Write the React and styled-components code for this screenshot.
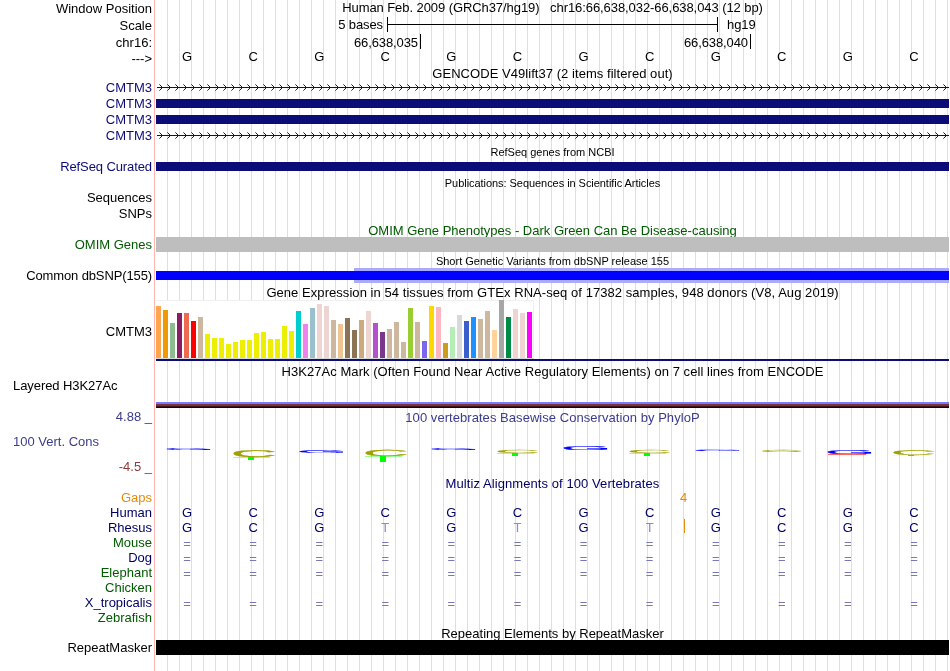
import React from 'react'
import styled, { createGlobalStyle } from 'styled-components'

const NAVY = '#0c0c78'
const ALIGN = '#000064'
const GREEN = '#005a00'
const ORANGE = '#e68a0a'
const CONS = '#3c3c8c'

const BASES = 'GCGCGCGCGCGC'.split('')
const RHESUS = 'GCGTGTGTGCGC'.split('')
const EQUALS = '============'.split('')

// [bar height, colour] for each of the GTEx tissues
const TISSUES = [
  [52, '#ffa54f'], [48, '#ee9a00'], [35, '#8fbc8f'], [45, '#8b1c62'], [45, '#ee6a50'], [37, '#ff0000'],
  [41, '#cdb79e'], [24, '#eeee00'], [20, '#eeee00'], [20, '#eeee00'], [14, '#eeee00'], [16, '#eeee00'],
  [18, '#eeee00'], [18, '#eeee00'], [25, '#eeee00'], [26, '#eeee00'], [19, '#eeee00'], [19, '#eeee00'],
  [32, '#eeee00'], [27, '#eeee00'], [47, '#00cdcd'], [34, '#ee82ee'], [50, '#9ac0cd'], [54, '#eed5d2'],
  [52, '#eed5d2'], [38, '#cdb79e'], [34, '#eec591'], [40, '#8b7355'], [28, '#8b7355'], [38, '#cdaa7d'],
  [47, '#eed5d2'], [35, '#b452cd'], [26, '#7a378b'], [29, '#cdb79e'], [36, '#cdb79e'], [16, '#cdb79e'],
  [50, '#9acd32'], [36, '#cdb79e'], [17, '#7a67ee'], [52, '#ffd700'], [51, '#ffb6c1'], [15, '#cd9b1d'],
  [31, '#b4eeb4'], [43, '#d9d9d9'], [37, '#3a5fcd'], [41, '#1e90ff'], [39, '#cdb79e'], [47, '#cdb79e'],
  [28, '#ffd39b'], [58, '#a6a6a6'], [41, '#008b45'], [49, '#eed5d2'], [45, '#eed5d2'], [46, '#ff00ff'],
]

// squashed logo letters: x, top, width, height
const LOGO = [
  ['G', 11, 23, 43, 2], ['C', 78, 25, 41, 7], ['G', 144, 25, 43, 3], ['C', 210, 25, 41, 6.4],
  ['G', 276, 23, 43, 2], ['C', 342, 25, 40, 3.4], ['G', 408, 21, 43, 4], ['C', 474, 25, 40, 3.4],
  ['G', 540, 25, 43, 1.4], ['C', 606.5, 25, 39.5, 2.2], ['G', 672, 25, 43, 4], ['C', 738, 25, 40.5, 5],
]

// bases with a negative score: x, top, stem height
const BELOW = [[77, 32, 3], [209, 31, 6], [341, 28, 3], [473, 28, 3], [737, 30, 1]]

// outline of each letter at 100px: left edge, width, height, baseline overshoot
const GLYPH = {
  G: [5, 66, 72, 1],
  C: [5, 64, 72, 1],
}
const LOGO_COLOR = { G: '#0000ff', C: '#a0a000' }

const GlobalStyle = createGlobalStyle`
  body {
    margin: 0;
    background: #fff;
    overflow: hidden;
  }
`

const Browser = styled.main`
  width: 949px;
  height: 671px;
  overflow: hidden;
  will-change: transform;
  color: #000;
  font-family: "Liberation Sans", Arial, sans-serif;
  font-size: 13px;
  white-space: pre;
  background:
    linear-gradient(#ffb4b4, #ffb4b4) 154px 0 / 1px 100% no-repeat,
    repeating-linear-gradient(90deg, transparent 0 11px, #dcdcf8 11px 12px) 156px 0 / 793px 100% no-repeat;
`

const Row = styled.div`
  display: grid;
  grid-template-columns: 152px 793px;
  column-gap: 4px;
  height: ${({h}) => h}px;
`

const Label = styled.div`
  height: 15px;
  line-height: 15px;
  margin-top: ${({top}) => top || 0}px;
  padding-left: ${({left}) => left ? 13 : 0}px;
  text-align: ${({left}) => left ? 'left' : 'right'};
  letter-spacing: ${({ls}) => ls || 0}px;
  color: ${({color}) => color || '#000'};
`

const Title = styled.div`
  height: ${({small}) => small ? 12 : 15}px;
  line-height: ${({small}) => small ? 12 : 15}px;
  margin-top: ${({top}) => top || 0}px;
  font-size: ${({small}) => small ? 11 : 13}px;
  text-align: center;
  letter-spacing: ${({ls}) => ls || 0}px;
  color: ${({color}) => color || '#000'};
`

const ScaleBar = styled.div`
  display: grid;
  grid-template-columns: 227px 331px auto;
  column-gap: 4px;
  line-height: 15px;
  letter-spacing: -0.1px;
  span:first-child {
    text-align: right;
  }
  span:last-child {
    padding-left: 5px;
  }
`

const Ruler = styled.div`
  height: 15px;
  border: solid #000;
  border-width: 0 1px;
  background: linear-gradient(#000, #000) 0 7px / 100% 1px no-repeat;
`

const Ticks = styled.div`
  display: grid;
  grid-template-columns: 265px 330px;
  letter-spacing: -0.1px;
`

const Tick = styled.span`
  height: 15px;
  line-height: 17px;
  padding-right: 2px;
  border-right: 1px solid #000;
  text-align: right;
`

const Cells = styled.div`
  display: grid;
  grid-template-columns: repeat(12, 1fr);
  height: 15px;
  line-height: 15px;
  margin-top: ${({top}) => top || 0}px;
  color: ${({color}) => color || '#000'};
`

const Cell = styled.span`
  padding-right: 4px;
  text-align: center;
  color: ${({faded}) => faded ? '#8c8cbe' : 'inherit'};
`

const Bar = styled.div`
  height: ${({h}) => h || 9}px;
  margin-top: ${({top}) => top || 0}px;
  background: ${({color}) => color || NAVY};
`

const Halo = styled.div`
  box-sizing: border-box;
  height: 15px;
  padding: 3px 0;
  background: linear-gradient(#aaaaff, #aaaaff) 198px 0 / 595px 100% no-repeat;
`

const Expression = styled.div`
  display: flex;
  flex-direction: column;
  border-bottom: 2px solid ${NAVY};
`

const Tissues = styled.div`
  display: flex;
  align-items: flex-end;
  gap: 2px;
  box-sizing: border-box;
  width: 378px;
  height: 59px;
  background: #fff;
  box-shadow: inset 0 1px #f0f0f0, inset -1px 0 #f0f0f0;
  border-bottom: 1px solid #d8d8d8;
`

const Tissue = styled.i`
  width: 5px;
  height: ${({h}) => h}px;
  background: ${({color}) => color};
`

const Histone = styled.div`
  height: 2px;
  margin-top: 23px;
  background: #7a7aff;
  border-bottom: 2px solid #7a3040;
  box-shadow: 0 1px #3c1420, 0 2px #180018;
`

const Gap = styled.div`
  padding-left: 524px;
  line-height: 15px;
  color: ${ORANGE};
`

// sits on top of the bases it splits
const Insert = styled.i`
  position: absolute;
  left: 528px;
  top: -1px;
  width: 1px;
  height: 14px;
  background: ${ORANGE};
`

const Relative = styled.div`
  position: relative;
`

const Strand = ({id}) => (
  <svg width="793" height="16" shapeRendering="crispEdges">
    <defs>
      <pattern id={id} width="8" height="16" patternUnits="userSpaceOnUse">
        <path
          d="M4 5h1v1h-1zM5 6h1v1h-1zM6 7h1v1h-1zM5 8h1v1h-1zM4 9h1v1h-1z"
          fill={NAVY}
        />
        <path d="M3 4h1v1h-1zM3 10h1v1h-1z" fill={NAVY} opacity="0.6" />
      </pattern>
    </defs>
    <rect width="793" height="16" fill={`url(#${id})`} />
    <rect x="1" y="7" width="792" height="1" fill={NAVY} />
  </svg>
)

const Logo = () => (
  <svg width="793" height="50" fontSize="100" textRendering="geometricPrecision">
    {LOGO.map(([base, x, y, w, h], i) => {
      const [left, gw, gh, over] = GLYPH[base]
      const sx = w / gw
      const sy = h / gh
      return (
        <text
          key={i}
          fill={LOGO_COLOR[base]}
          stroke={LOGO_COLOR[base]}
          strokeWidth="2"
          transform={`translate(${x - left * sx} ${y + h - over * sy}) scale(${sx} ${sy})`}
        >
          {base}
        </text>
      )
    })}
    {BELOW.map(([x, y, h], i) => (
      <g key={i} fill="#00ff00" shapeRendering="crispEdges">
        <rect x={x} y={y} width="37" height="1" opacity={h > 1 ? 0.4 : 0.1} />
        <rect x={x + 15} y={y} width="6" height={h} />
      </g>
    ))}
    <rect x="672" y="29" width="38" height="1" fill="#ff0000" opacity="0.6" />
  </svg>
)

const Bases = ({letters, ...rest}) => (
  <Cells {...rest}>
    {letters.map((base, i) => <Cell key={i} faded={base === 'T' ? 'true' : undefined}>{base}</Cell>)}
  </Cells>
)

const App = () => {
  return (
    <>
      <GlobalStyle />
      <Browser>
        <Row h={17}>
          <Label top={1}>Window Position</Label>
          <Title ls={-0.075}>Human Feb. 2009 (GRCh37/hg19)   chr16:66,638,032-66,638,043 (12 bp)</Title>
        </Row>
        <Row h={17}>
          <Label top={1}>Scale</Label>
          <ScaleBar>
            <span>5 bases</span>
            <Ruler />
            <span>hg19</span>
          </ScaleBar>
        </Row>
        <Row h={17}>
          <Label top={1}>chr16:</Label>
          <Ticks>
            <Tick>66,638,035</Tick>
            <Tick>66,638,040</Tick>
          </Ticks>
        </Row>
        <Row h={15}>
          <Label>---&gt;</Label>
          <Bases letters={BASES} top={-2} />
        </Row>
        <Row h={14}>
          <Label />
          <Title ls={0.05}>GENCODE V49lift37 (2 items filtered out)</Title>
        </Row>
        <Row h={16}>
          <Label color={NAVY}>CMTM3</Label>
          <Strand id="strand-a" />
        </Row>
        <Row h={16}>
          <Label color={NAVY}>CMTM3</Label>
          <Bar top={3} />
        </Row>
        <Row h={16}>
          <Label color={NAVY}>CMTM3</Label>
          <Bar top={3} />
        </Row>
        <Row h={16}>
          <Label color={NAVY}>CMTM3</Label>
          <Strand id="strand-b" />
        </Row>
        <Row h={15}>
          <Label />
          <Title small="true" top={2}>RefSeq genes from NCBI</Title>
        </Row>
        <Row h={15}>
          <Label color={NAVY} ls={-0.1}>RefSeq Curated</Label>
          <Bar top={3} />
        </Row>
        <Row h={16}>
          <Label />
          <Title small="true" top={3} ls={-0.05}>Publications: Sequences in Scientific Articles</Title>
        </Row>
        <Row h={16}>
          <Label>Sequences</Label>
        </Row>
        <Row h={15}>
          <Label>SNPs</Label>
        </Row>
        <Row h={16}>
          <Label />
          <Title top={2} color={GREEN}>OMIM Gene Phenotypes - Dark Green Can Be Disease-causing</Title>
        </Row>
        <Row h={15}>
          <Label color={GREEN}>OMIM Genes</Label>
          <Bar h={15} color="#bebebe" />
        </Row>
        <Row h={16}>
          <Label />
          <Title small="true" top={3}>Short Genetic Variants from dbSNP release 155</Title>
        </Row>
        <Row h={15}>
          <Label ls={-0.12}>Common dbSNP(155)</Label>
          <Halo>
            <Bar color="#0000ff" />
          </Halo>
        </Row>
        <Row h={17}>
          <Label />
          <Title top={2} ls={0.055}>Gene Expression in 54 tissues from GTEx RNA-seq of 17382 samples, 948 donors (V8, Aug 2019)</Title>
        </Row>
        <Row h={61}>
          <Label top={24}>CMTM3</Label>
          <Expression>
            <Tissues>
              {TISSUES.map(([h, color], i) => <Tissue key={i} h={h} color={color} />)}
            </Tissues>
          </Expression>
        </Row>
        <Row h={18}>
          <Label />
          <Title top={3} ls={0.05}>H3K27Ac Mark (Often Found Near Active Regulatory Elements) on 7 cell lines from ENCODE</Title>
        </Row>
        <Row h={29}>
          <Label left="true" top={-1} ls={-0.07}>Layered H3K27Ac</Label>
          <Histone />
        </Row>
        <Row h={67}>
          <div>
            <Label top={1} color={CONS}>4.88 _</Label>
            <Label left="true" top={10} color={CONS}>100 Vert. Cons</Label>
            <Label top={10} color="#8c3c3c">-4.5 _</Label>
          </div>
          <div>
            <Title top={2} color={CONS} ls={0.05}>100 vertebrates Basewise Conservation by PhyloP</Title>
            <Logo />
          </div>
        </Row>
        <Row h={15}>
          <Label />
          <Title top={1} color={ALIGN} ls={0.08}>Multiz Alignments of 100 Vertebrates</Title>
        </Row>
        <Row h={15}>
          <Label color={ORANGE}>Gaps</Label>
          <Gap>4</Gap>
        </Row>
        <Row h={15}>
          <Label color={ALIGN}>Human</Label>
          <Bases letters={BASES} color={ALIGN} />
        </Row>
        <Row h={15}>
          <Label color={ALIGN}>Rhesus</Label>
          <Relative>
            <Bases letters={RHESUS} color={ALIGN} />
            <Insert />
          </Relative>
        </Row>
        <Row h={15}>
          <Label color={GREEN}>Mouse</Label>
          <Bases letters={EQUALS} top={1} color="#7878b4" />
        </Row>
        <Row h={15}>
          <Label color={ALIGN}>Dog</Label>
          <Bases letters={EQUALS} top={1} color="#7878b4" />
        </Row>
        <Row h={15}>
          <Label color={GREEN}>Elephant</Label>
          <Bases letters={EQUALS} top={1} color="#7878b4" />
        </Row>
        <Row h={15}>
          <Label color={GREEN}>Chicken</Label>
        </Row>
        <Row h={15}>
          <Label color={ALIGN}>X_tropicalis</Label>
          <Bases letters={EQUALS} top={1} color="#7878b4" />
        </Row>
        <Row h={15}>
          <Label color={GREEN}>Zebrafish</Label>
        </Row>
        <Row h={15}>
          <Label />
          <Title top={1}>Repeating Elements by RepeatMasker</Title>
        </Row>
        <Row h={15}>
          <Label>RepeatMasker</Label>
          <Bar h={15} color="#000" />
        </Row>
      </Browser>
    </>
  )
}

export default App
